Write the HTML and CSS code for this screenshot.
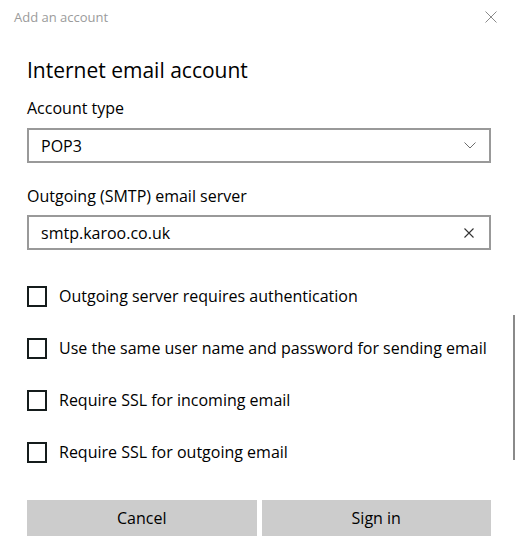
FILE: index.html
```html
<!DOCTYPE html>
<html lang="en">
<head>
    <meta charset="UTF-8">
    <meta name="viewport" content="width=device-width, initial-scale=1.0">
    <title>Add an account</title>
    <link rel="stylesheet" href="styles.css">
</head>
<body>
    <div class="dialog">
        <div class="titlebar">
            <span class="titlebar-text">Add an account</span>
            <button class="close" aria-label="Close">
                <svg width="12" height="12" viewBox="0 0 12 12">
                    <path d="M0.5 0.5 L11.5 11.5 M11.5 0.5 L0.5 11.5" stroke="#8a8a8a" stroke-width="1" fill="none"/>
                </svg>
            </button>
        </div>

        <div class="content">
            <h1>Internet email account</h1>

            <label class="field-label">Account type</label>
            <div class="select">
                <span>POP3</span>
                <svg width="12" height="7" viewBox="0 0 12 7">
                    <path d="M0.5 0.5 L6 6 L11.5 0.5" stroke="#6d6d6d" stroke-width="1" fill="none"/>
                </svg>
            </div>

            <label class="field-label second">Outgoing (SMTP) email server</label>
            <div class="textbox">
                <span>smtp.karoo.co.uk</span>
                <svg width="10" height="10" viewBox="0 0 10 10">
                    <path d="M0.5 0.5 L9.5 9.5 M9.5 0.5 L0.5 9.5" stroke="#333" stroke-width="1.1" fill="none"/>
                </svg>
            </div>

            <div class="options">
                <div class="check-row"><span class="box"></span>Outgoing server requires authentication</div>
                <div class="check-row"><span class="box"></span>Use the same user name and password for sending email</div>
                <div class="check-row"><span class="box"></span>Require SSL for incoming email</div>
                <div class="check-row"><span class="box"></span>Require SSL for outgoing email</div>
            </div>

            <div class="actions">
                <button class="button">Cancel</button>
                <button class="button">Sign in</button>
            </div>
        </div>

        <div class="scrollbar"></div>
    </div>
</body>
</html>
```

FILE: styles.css
```css
:root {
    --text-color: #000000;
    --muted-color: #9b9b9b;
    --field-border: #999999;
    --check-border: #151c1c;
    --button-bg: #cccccc;
}

* {
    box-sizing: border-box;
    margin: 0;
    padding: 0;
    font-family: 'Open Sans', 'Noto Sans', sans-serif;
}

body {
    background: #ffffff;
    color: var(--text-color);
}

.dialog {
    position: relative;
    width: 518px;
    height: 553px;
    overflow: hidden;
}

/* Window title row */
.titlebar {
    height: 34px;
    display: flex;
    align-items: center;
    justify-content: space-between;
    padding: 0 21px 0 14px;
}

.titlebar-text {
    font-size: 13px;
    color: var(--muted-color);
    line-height: 34px;
}

.close {
    border: none;
    background: none;
    display: flex;
    width: 12px;
    height: 12px;
}

.content {
    padding: 0 27px;
}

h1 {
    font-size: 21px;
    font-weight: 400;
    line-height: 28px;
    margin-top: 22px;
    margin-bottom: 13px;
}

.field-label {
    display: block;
    font-size: 16px;
    line-height: 22px;
    margin-bottom: 9px;
}

.field-label.second {
    margin-top: 22px;
    margin-bottom: 8px;
}

.select,
.textbox {
    height: 35px;
    border: 2px solid var(--field-border);
    display: flex;
    align-items: center;
    justify-content: space-between;
    padding: 0 12px 0 12px;
    font-size: 16px;
}

.select svg {
    margin-right: 1px;
}

.textbox svg {
    margin-right: 3px;
}

/* Checkbox list */
.options {
    display: flex;
    flex-direction: column;
    gap: 20px;
    margin-top: 30px;
}

.check-row {
    height: 32px;
    display: flex;
    align-items: center;
    font-size: 16px;
}

.box {
    width: 20px;
    height: 21px;
    border: 2px solid var(--check-border);
    margin-right: 12px;
    flex-shrink: 0;
}

.actions {
    display: flex;
    gap: 5px;
    margin-top: 32px;
}

.button {
    flex: 1;
    height: 36px;
    border: none;
    background: var(--button-bg);
    color: var(--text-color);
    font-size: 16px;
}

.scrollbar {
    position: absolute;
    left: 513px;
    top: 315px;
    width: 2px;
    height: 145px;
    background: #8a8a8a;
}
```
